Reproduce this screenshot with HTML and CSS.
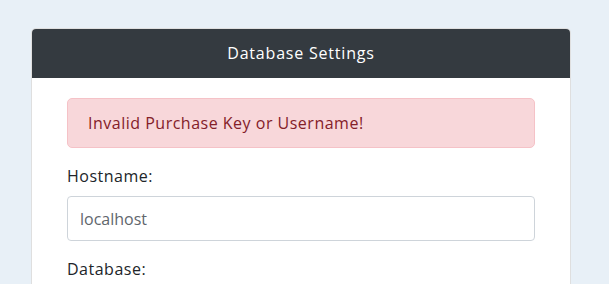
FILE: index.html
```html
<!DOCTYPE html>
<html lang="en">
<head>
    <meta charset="UTF-8">
    <meta name="viewport" content="width=device-width, initial-scale=1.0">
    <title>Database Settings</title>
    <link rel="stylesheet" href="styles.css">
</head>
<body>
    <div class="card">
        <div class="card-header">Database Settings</div>
        <div class="card-body">
            <div class="alert">Invalid Purchase Key or Username!</div>
            <div class="form-group">
                <label class="form-label" for="hostname">Hostname:</label>
                <input class="form-control" type="text" id="hostname" value="localhost">
            </div>
            <div class="form-group">
                <label class="form-label" for="database">Database:</label>
                <input class="form-control" type="text" id="database" value="">
            </div>
        </div>
    </div>
</body>
</html>
```

FILE: styles.css
```css
body {
    font-family: 'Open Sans', sans-serif;
    font-size: 16px;
    line-height: 24px;
    letter-spacing: 0.5px;
    color: #212529;
    background: #e8f0f7;
    margin: 0;
    padding: 28px 0 0 31px;
}

.card {
    width: 538px;
    background: #fff;
    border: 1px solid rgba(0, 0, 0, 0.125);
    border-radius: 5px;
    overflow: hidden;
}

.card-header {
    background: #343a40;
    color: #fff;
    text-align: center;
    font-weight: 500;
    letter-spacing: 0.8px;
    padding: 12px 0 13px;
}

.card-body {
    padding: 20px 35px;
}

.alert {
    background: #f8d7da;
    border: 1px solid #f5c2c7;
    color: #842029;
    border-radius: 5px;
    padding: 12px 20px;
    margin-bottom: 16px;
}

.form-group {
    margin-bottom: 16px;
}

.form-label {
    display: block;
    margin-bottom: 8px;
}

.form-control {
    display: block;
    box-sizing: border-box;
    width: 100%;
    height: 45px;
    padding: 0 12px;
    font: inherit;
    color: #5f666d;
    border: 1px solid #ced4da;
    border-radius: 4px;
    background: #fff;
}
```
